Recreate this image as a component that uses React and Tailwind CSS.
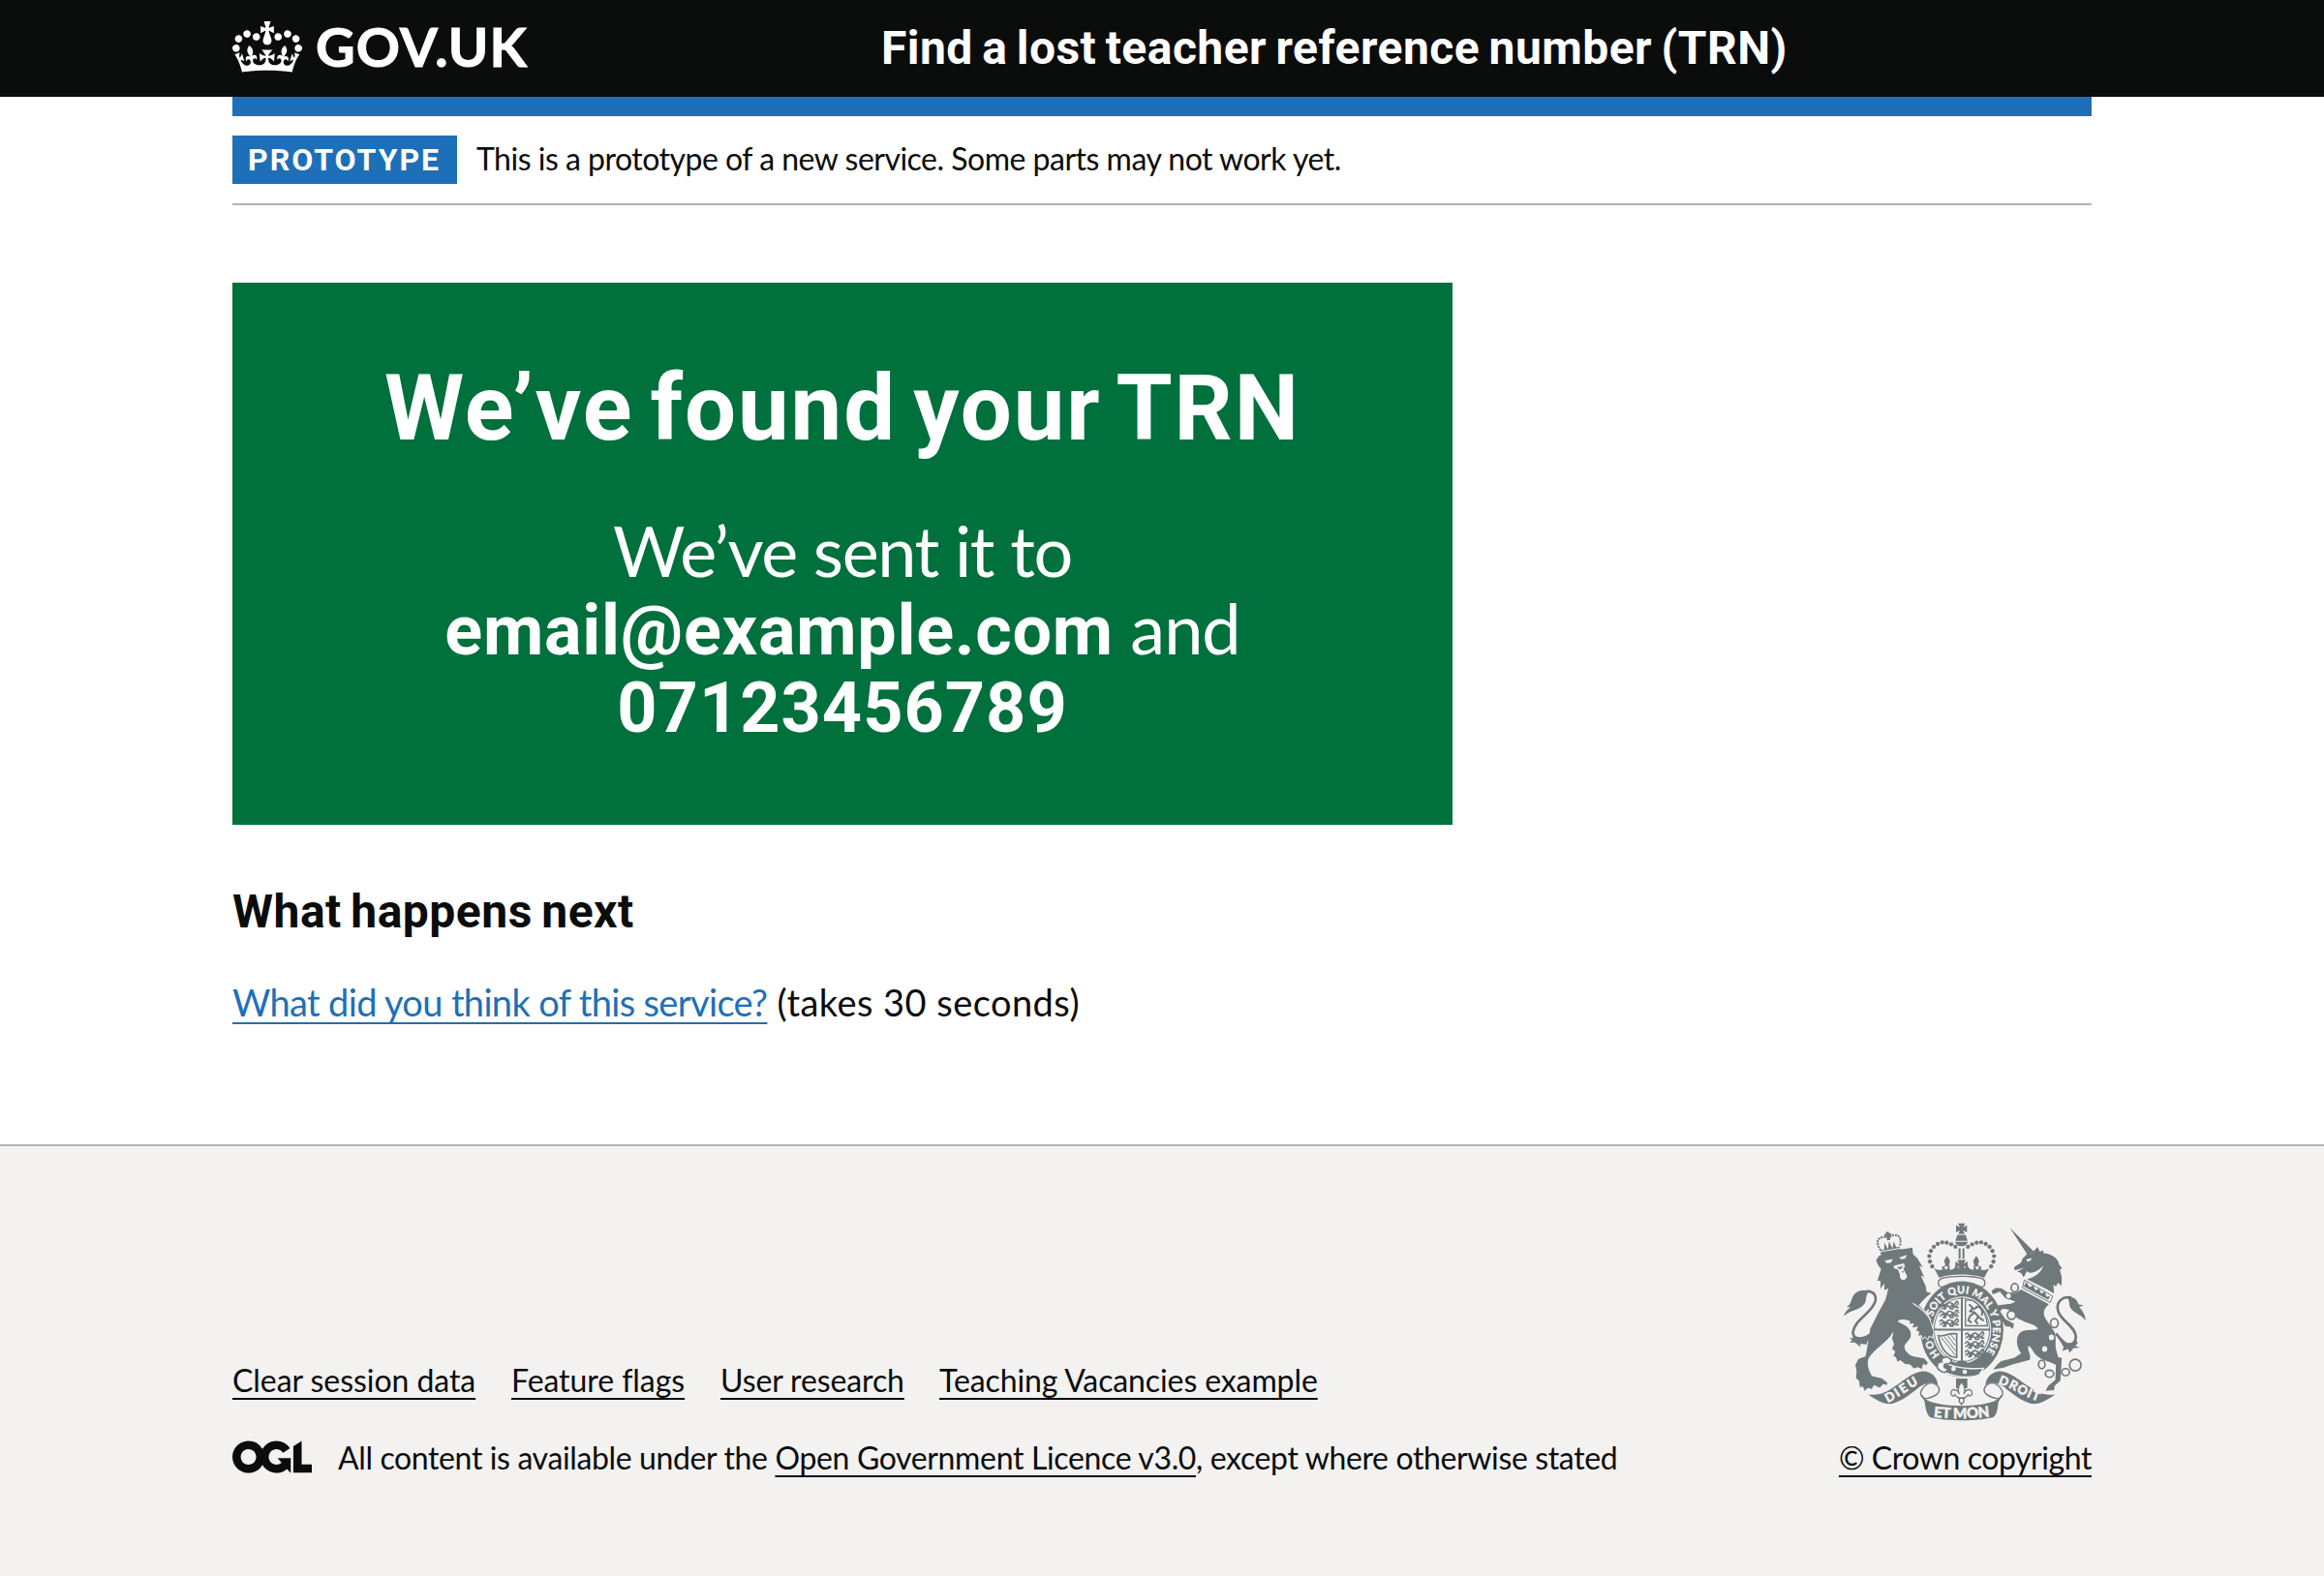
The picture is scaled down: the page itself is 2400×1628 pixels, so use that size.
import React from "react";

const lato = "font-['Lato','Liberation_Sans',sans-serif]";
const roboto = "font-['Roboto','Liberation_Sans',sans-serif] font-bold";
const linkLine =
  "underline decoration-2 underline-offset-[6px] [text-decoration-skip-ink:none]";

function Crown() {
  return (
    <svg viewBox="0 0 132 97" className="h-[53px] w-[72px]" fill="currentColor" aria-hidden="true">
      <path
        fillRule="evenodd"
        d="M25 30.2c3.5 1.5 7.7-.2 9.1-3.7 1.5-3.6-.2-7.8-3.9-9.2-3.6-1.4-7.6.3-9.1 3.9-1.4 3.5.3 7.5 3.9 9zM9 39.5c3.6 1.5 7.8-.2 9.2-3.7 1.5-3.6-.2-7.8-3.9-9.1-3.6-1.5-7.6.2-9.1 3.8-1.4 3.5.3 7.5 3.8 9zM4.4 57.2c3.5 1.5 7.7-.2 9.1-3.8 1.5-3.6-.2-7.7-3.9-9.1-3.5-1.5-7.6.3-9.1 3.8-1.4 3.5.3 7.6 3.9 9.1zm38.3-21.4c3.5 1.5 7.7-.2 9.1-3.8 1.5-3.6-.2-7.7-3.9-9.1-3.6-1.5-7.6.3-9.1 3.8-1.3 3.6.4 7.7 3.9 9.1zm64.4-5.6c-3.6 1.5-7.8-.2-9.1-3.7-1.5-3.6.2-7.8 3.8-9.2 3.6-1.4 7.7.3 9.2 3.9 1.3 3.5-.4 7.5-3.9 9zm15.9 9.3c-3.6 1.5-7.7-.2-9.1-3.7-1.5-3.6.2-7.8 3.7-9.1 3.6-1.5 7.7.2 9.2 3.8 1.5 3.5-.3 7.5-3.8 9zm4.7 17.7c-3.6 1.5-7.8-.2-9.2-3.8-1.5-3.6.2-7.7 3.9-9.1 3.6-1.5 7.7.3 9.2 3.8 1.3 3.5-.4 7.6-3.9 9.1zM89.3 35.8c-3.6 1.5-7.8-.2-9.2-3.8-1.4-3.6.2-7.7 3.9-9.1 3.6-1.5 7.7.3 9.2 3.8 1.4 3.6-.3 7.7-3.9 9.1zM69.7 17.7l8.9 4.7V9.3l-8.9 2.8c-.2-.3-.5-.6-.9-.9L72.4 0H59.6l3.5 11.2c-.3.3-.6.5-.9.9l-8.8-2.8v13.1l8.8-4.7c.3.3.6.7.9.9l-5 15.4v.1c-.2.8-.4 1.6-.4 2.4 0 4.1 3.1 7.5 7 8.1h.2c.3 0 .7.1 1 .1.4 0 .7 0 1-.1h.2c4-.6 7.1-4.1 7.1-8.1 0-.8-.1-1.7-.4-2.4V34l-5.1-15.4c.4-.2.7-.6 1-.9zM66 92.8c16.9 0 32.8 1.1 47.1 3.2 4-16.9 8.9-26.7 14-33.5l-9.6-3.4c1 4.9 1.1 7.2 0 10.2-1.5-1.4-3-4.3-4.2-8.7L108.6 76c2.8-2 5-3.2 7.5-3.3-4.4 9.4-10 11.9-13.6 11.2-4.3-.8-6.3-4.6-5.6-7.9 1-4.7 5.7-5.9 8-.5 4.3-8.7-3-11.4-7.6-8.8 7.1-7.2 7.9-13.5 2.1-21.1-8 6.1-8.1 12.3-4.5 20.8-4.7-5.4-12.1-2.5-9.5 6.2 3.4-5.2 7.9-2 7.2 3.1-.6 4.3-6.4 7.8-13.5 7.2-10.3-.9-10.9-8-11.2-13.8 2.5-.5 7.1 1.8 11 7.3L80.2 60c-4.1 4.4-8 5.3-12.3 5.4 1.4-4.4 8-11.6 8-11.6H55.5s6.4 7.2 7.9 11.6c-4.2-.1-8-1-12.3-5.4l1.4 16.4c3.9-5.5 8.5-7.7 10.9-7.3-.3 5.8-.9 12.8-11.1 13.8-7.2.6-12.9-2.9-13.5-7.2-.7-5 3.8-8.3 7.1-3.1 2.7-8.7-4.6-11.6-9.4-6.2 3.7-8.5 3.6-14.7-4.6-20.8-5.8 7.6-5 13.9 2.2 21.1-4.7-2.6-11.9.1-7.7 8.8 2.3-5.5 7.1-4.2 8.1.5.7 3.3-1.3 7.1-5.7 7.9-3.5.7-9-1.8-13.5-11.2 2.5.1 4.7 1.3 7.5 3.3l-4.7-15.4c-1.2 4.4-2.7 7.2-4.3 8.7-1.1-3-.9-5.3 0-10.2l-9.5 3.4c5 6.9 9.9 16.7 14 33.5 14.8-2.1 30.8-3.2 47.7-3.2z"
      />
    </svg>
  );
}

function OglLogo() {
  return (
    <svg viewBox="0 0 483.2 195.7" className="-mt-[3px] h-[34px] w-[82px] shrink-0" fill="currentColor" aria-hidden="true">
      <path d="M421.5 142.8V.1l-50.7 32.3v161.1h112.4v-50.7zm-122.3-9.6A47.12 47.12 0 0 1 221 97.8c0-26 21.1-47.1 47.1-47.1 16.7 0 31.4 8.7 39.7 21.8l42.7-27.2A97.63 97.63 0 0 0 268.1 0c-36.5 0-68.3 20.1-85.1 49.7A98 98 0 0 0 97.8 0C43.9 0 0 43.9 0 97.8s43.9 97.8 97.8 97.8c36.5 0 68.3-20.1 85.1-49.7a97.76 97.76 0 0 0 149.6 25.4l19.4 22.2h3v-87.8h-80l24.3 27.5zM97.8 145c-26 0-47.1-21.1-47.1-47.1s21.1-47.1 47.1-47.1 47.1 21.1 47.1 47.1S123.8 145 97.8 145" />
    </svg>
  );
}

const G = "#6f787b";
const W = "#f3f2f1";

const beads = [
  [346, 206], [339, 191], [337, 174], [342, 158], [351, 145], [363, 136], [377, 131], [391, 132], [405, 137], [418, 145],
];

function Ribbon() {
  return (
    <>
      <path fill={G} d="M148 603C185 608 205 596 235 575C265 553 290 533 318 531C345 532 360 548 364 573C345 562 325 567 305 581C280 602 250 625 222 632C195 635 172 620 148 603Z" />
      <path fill={W} stroke={G} strokeWidth="4" d="M330 572C345 562 362 570 368 586C370 604 345 612 330 616C312 618 306 600 314 588C318 580 324 576 330 572Z" />
      <path fill="none" stroke={G} strokeWidth="4" d="M314 606C322 622 336 640 352 640" />
    </>
  );
}

function HalfCrown() {
  return (
    <>
      {beads.map(([x, y]) => (
        <circle key={x + "-" + y} cx={x} cy={y} r="6.5" />
      ))}
      <path d="M352 212L368 241C388 234 412 231 438 231V214C428 216 424 208 420 200C417 212 408 220 399 214C404 210 400 202 394 208L392 216L386 214L384 207C378 202 373 208 379 214C370 220 361 216 352 212Z" />
      <path d="M392 174C401 184 404 192 398 199L401 206H383L387 199C381 190 384 184 392 174Z" />
    </>
  );
}

function Lions({ x, y }) {
  return (
    <g transform={`translate(${x} ${y})`} fill="none" stroke={G} strokeWidth="5" strokeLinecap="round">
      {[0, 27, 54].map((dy) => (
        <path
          key={dy}
          d={`M2 ${6 + dy}q6 -8 10 0t10 2t10 -6t9 5t10 -5t8 4M4 ${16 + dy}l8 -6l6 8l8 -7l7 7l7 -8l8 6l7 -6M12 ${21 + dy}h8M34 ${21 + dy}h9M53 ${17 + dy}h6M18 ${8 + dy}v8M42 ${6 + dy}v10`}
        />
      ))}
    </g>
  );
}

function Crest() {
  return (
    <svg viewBox="72 70 750 616" className="mr-1.5 mb-[18px] block h-[205px] w-[250px]" fill={G} aria-hidden="true">
      <defs>
        <path id="garter" d="M385 494A97 111 0 1 1 497 489" />
        <path id="dieu" d="M208 629C243 614 280 579 322 563" />
        <path id="etmon" d="M350 673Q437 683 528 671" />
        <path id="droit" d="M550 570C592 580 625 612 700 632" />
      </defs>

      {/* royal crown */}
      <path d="M426 72H448L442 84L454 78V100L442 94L447 105H427L432 94L420 100V78L432 84Z" />
      <path d="M424 108H450L456 126H418ZM418 129H456C454 139 446 143 437 143S420 139 418 129Z" />
      <path d="M428 150H434V182H428ZM440 150H446V182H440Z" />
      <path d="M424 186H450L444 198L456 190V212L444 204L448 216H426L430 204L418 212V190L430 198Z" />
      <HalfCrown />
      <g transform="translate(875 0) scale(-1 1)">
        <HalfCrown />
      </g>
      <path fill={W} stroke={G} strokeWidth="4" d="M376 243C410 234 465 234 500 243C514 249 512 268 500 270C465 258 410 258 376 270C362 268 360 249 376 243Z" />

      {/* shield and garter */}
      <ellipse cx="438" cy="401" rx="129" ry="149" />
      <ellipse cx="438" cy="403" rx="91" ry="104" fill={W} />
      <ellipse cx="438" cy="403" rx="86" ry="99" fill="none" stroke={G} strokeWidth="3" />
      <path d="M435 303H441V505H435ZM350 399H526V405H350Z" />
      <Lions x={368} y={316} />
      <Lions x={447} y={411} />
      <path fill="none" stroke={G} strokeWidth="4" d="M449 311H470C498 325 515 355 517 390H449Z" />
      <path fill="none" stroke={G} strokeWidth="6" strokeLinecap="round" d="M462 325l10 10l-8 10l14 4l12 14l14 10M478 349l-14 10l-6 14l8 6M490 361l-10 14l6 8M484 330c14 2 20 14 16 26M476 338l10 -6" />
      <path fill="none" stroke={G} strokeWidth="5" d="M362 420C378 428 396 410 422 415V488C398 490 372 462 366 424" />
      <path fill="none" stroke={G} strokeWidth="3" d="M374 426L418 482M384 424L418 468M394 421L418 452M404 418L418 436" />
      <path d="M428 498H448L462 512H414Z" />

      {/* lion */}
      <path
        stroke={W}
        strokeWidth="3"
        d="M170 187L180 172L197 166Q240 150 286 146L288 168L302 181L320 212L308 206L324 242L313 236L327 266L330 284L346 288L326 304L306 326L332 352L342 380L352 410L346 428L336 422L332 434L324 424L316 432L312 420L302 424L304 408L294 406L300 394L282 398L288 384L274 386L276 376C262 372 250 370 240 376L262 388C278 398 284 412 280 426C270 444 258 446 262 462C270 478 282 484 300 486L322 490L334 505L328 514L318 510L316 526L302 520L288 524L278 512L262 510L246 498L238 504L232 488L224 484L230 470L220 462L226 448L220 428L224 412C210 440 170 460 152 488C142 505 150 530 160 545L190 552L208 566L206 576L194 572L184 584L166 576L158 588L146 584L136 594L130 580L120 582L118 562L108 552L110 530L106 512L116 492L138 484L146 440L152 400L174 356L200 308L208 276L196 282V262L184 280V252L174 252L186 214L178 204Z"
      />
      <path fill={W} d="M198 188L224 183L218 194L206 196ZM244 178L268 170L262 181L250 184ZM226 204L258 196L262 206L256 212L268 236Q266 248 254 248Q244 244 246 232L240 216L228 212Z" />
      <path d="M236 210L256 204L248 216ZM250 222L258 220L256 226Z" />
      <path fill="none" stroke={W} strokeWidth="4" d="M286 320C306 332 328 350 342 372" />
      <g transform="rotate(-10 213 135)">
        <path d="M184 150H242L246 166H180Z" />
        <path fill="none" stroke={G} strokeWidth="7" strokeDasharray="0.1 9" strokeLinecap="round" d="M182 148C168 118 186 104 213 116C240 104 258 118 244 148" />
        <path d="M208 98H218V104H224V112H218V124H208V112H202V104H208ZM194 152L198 130L206 152L213 128L220 152L228 130L232 152Z" />
        <path fill="none" stroke={W} strokeWidth="3" d="M184 155H243" />
      </g>
      <path fill="none" stroke={G} strokeWidth="8" d="M120 292C150 274 174 286 170 312C162 350 106 368 100 410C100 432 130 436 156 416" />
      <path d="M72 360C74 348 84 338 94 332L80 332C92 326 92 318 98 304C106 282 128 276 150 284C136 296 146 312 132 326C118 342 92 340 72 360ZM98 412C110 436 140 432 164 404L158 428C148 438 138 440 146 448L122 446L124 456L106 442L90 442L98 434L88 428L100 428Z" />

      {/* unicorn */}
      <path d="M587 86L662 160L642 170Z" />
      <path d="M640 168L656 164L673 145L680 160L690 156L692 165C722 168 738 184 740 200L749 212L742 216L748 240L747 266L736 256L730 268L722 262L724 290L700 276L640 246C664 240 686 224 690 204C676 222 650 232 640 220L630 240L622 226L610 222L632 210L602 218L600 208L622 194L626 182Z" />
      <path fill={W} d="M638 184L656 180L650 189L641 191Z" />
      <path fill={W} stroke={G} strokeWidth="3" d="M632 248L720 298L712 318L626 272Z" />
      <path d="M630 268L638 254L648 270L660 264L666 280L678 274L684 290L696 284L700 300L712 298L706 310Z" />
      <path d="M622 277L708 323C692 338 688 350 698 368L722 404C734 420 726 440 730 462L737 488L748 490L744 560L726 576L724 590L698 592L706 576L728 558L730 512C712 500 690 500 672 484C656 470 656 456 644 452C640 468 656 482 648 496L590 512L568 520L535 526L548 510L560 500L600 490L622 476C606 452 604 424 620 410C636 400 664 406 674 400C668 384 640 384 622 372C604 368 600 350 588 344C572 332 556 338 558 348L574 370L600 384L596 400L586 392L574 392L556 362L542 346L552 326L590 322L604 316C592 306 578 312 568 298L556 284L534 292L530 282L544 272L562 274L580 286L606 288Z" />
      <g fill="none" stroke={G} strokeWidth="5">
        <ellipse cx="602" cy="272" rx="11" ry="13" fill={W} />
        <ellipse cx="592" cy="357" rx="13" ry="13" fill={W} />
        <ellipse cx="725" cy="382" rx="12" ry="14" fill={W} />
        <ellipse cx="686" cy="510" rx="10" ry="13" fill={W} />
        <ellipse cx="710" cy="539" rx="13" ry="11" fill={W} />
        <ellipse cx="760" cy="534" rx="12" ry="11" fill={W} />
        <circle cx="790" cy="512" r="18" />
      </g>
      <ellipse cx="583" cy="297" rx="7" ry="8" fill={W} />
      <ellipse cx="716" cy="426" rx="8" ry="9" fill={W} />
      <ellipse cx="695" cy="462" rx="8" ry="9" fill={W} />
      <path fill="none" stroke={G} strokeWidth="8" d="M778 302C745 298 728 320 738 348C748 376 790 392 792 424C792 442 778 452 762 446C750 440 738 424 730 414" />
      <path d="M764 304C780 296 796 306 800 324L816 326L802 332C812 342 822 358 822 374C808 354 786 352 776 336C768 324 776 314 764 304ZM732 420C750 444 764 452 794 436L798 444L790 452L804 458L784 460L772 474L768 462L750 468L754 456Z" />

      {/* garter motto and buckle */}
      <g fill={W} stroke={W} strokeWidth="1" fontFamily="Lato, sans-serif" fontWeight="900" fontSize="32">
        <text><textPath href="#garter" startOffset="20" textLength="54">HO</textPath></text>
        <text><textPath href="#garter" startOffset="146" textLength="362">SOIT QUI MAL Y PENSE</textPath></text>
      </g>
      <path stroke={W} strokeWidth="4" d="M378 498C400 518 450 526 505 522L492 542C460 555 410 550 370 528Z" />
      <circle cx="412" cy="524" r="7" fill={W} />
      <circle cx="447" cy="533" r="7" fill={W} />
      <path fill={W} stroke={G} strokeWidth="5" d="M404 494C390 480 370 490 376 502C360 500 356 522 370 528C380 540 398 532 392 522C380 522 380 508 392 508C402 508 408 502 404 494Z" />

      {/* motto ribbons */}
      <Ribbon />
      <g transform="translate(875 0) scale(-1 1)">
        <Ribbon />
      </g>
      <path d="M322 616C360 646 515 646 552 616C550 650 546 668 534 675C480 687 395 687 340 675C328 664 324 644 322 616Z" />
      <g fill={W} stroke={W} strokeWidth="1.5" fontFamily="Lato, sans-serif" fontWeight="900" fontSize="39">
        <text><textPath href="#dieu" textLength="112">DIEU</textPath></text>
        <text fontSize="45"><textPath href="#etmon" textLength="175">ET MON</textPath></text>
        <text><textPath href="#droit" textLength="136">DROIT</textPath></text>
      </g>

      {/* fleur-de-lis */}
      <path d="M420 554H455V584H420Z" />
      <path fill={W} stroke={G} strokeWidth="4" d="M437 563C450 580 450 590 444 602C448 588 468 582 470 598C470 608 460 612 458 604C452 612 448 614 444 616V626L437 634L430 626V616C426 614 422 612 416 604C414 612 404 608 404 598C406 582 426 588 430 602C424 590 424 580 437 563Z" />
      <path d="M428 612H446V617H428Z" />
    </svg>
  );
}

const footerLinks = [
  { label: "Clear session data", cls: "w-[251px] tracking-[-0.06px]" },
  { label: "Feature flags", cls: "w-[179px] tracking-[-0.06px]" },
  { label: "User research", cls: "w-[189px] tracking-[-0.12px]" },
  { label: "Teaching Vacancies example", cls: "w-[391px] tracking-[-0.11px]" },
];

export default function App() {
  return (
    <div className={`${lato} flex min-h-[1628px] flex-col bg-white text-[#0b0c0c]`}>
      <header className="h-[100px] bg-[#0b0c0c] text-white">
        <div className="mx-auto flex h-full w-[1920px] items-center">
          <a className="flex w-[670px] items-center">
            <span className="-mt-1">
              <Crown />
            </span>
            <span className="-mt-[5px] ml-3.5 text-[56px] leading-[60px] font-bold tracking-[1.2px] [-webkit-text-stroke:1px_white]">GOV.UK</span>
          </a>
          <span className={`${roboto} text-[48px] leading-[60px] tracking-[0.46px] [word-spacing:-3px] whitespace-nowrap`}>
            Find a lost teacher reference number (TRN)
          </span>
        </div>
      </header>

      <div className="mx-auto w-[1920px]">
        <div className="h-5 bg-[#1d70b8]" />
        <div className="flex h-[92px] border-b-2 border-[#b1b4b6] pt-5">
          <strong className={`${roboto} h-[50px] w-[232px] bg-[#1d70b8] pl-4 text-[32px] leading-[50px] tracking-[2px] text-white`}>
            PROTOTYPE
          </strong>
          <span className="ml-5 text-[32px] leading-[47px] tracking-[-0.5px] whitespace-nowrap">
            This is a prototype of a new service. Some parts may not work yet.
          </span>
        </div>

        <main className="h-[970px] pt-20">
          <section className="h-[560px] w-[1260px] bg-[#00703c] pt-20 text-center text-white">
            <h1 className={`${roboto} text-[94px] leading-[100px] tracking-[1.9px] [word-spacing:-8px]`}>We’ve found your TRN</h1>
            <div className="mt-14 text-[72px] leading-[80px] whitespace-nowrap">
              <div className="h-20 tracking-[-1.4px]">We’ve sent it to</div>
              <div className="h-20">
                <b className={`${roboto} leading-none tracking-[0.7px]`}>email@example.com</b>
                <span className="tracking-[-1px]"> and</span>
              </div>
              <div className="h-20">
                <b className={`${roboto} leading-none tracking-[1px]`}>07123456789</b>
              </div>
            </div>
          </section>
          <h2 className={`${roboto} mt-[60px] text-[48px] leading-[60px] tracking-[0.5px] [word-spacing:-3px]`}>What happens next</h2>
          <p className="mt-[38px] text-[38px] leading-[50px] whitespace-nowrap">
            <a className={`${linkLine} tracking-[-0.65px] text-[#1d70b8]`}>What did you think of this service?</a>
            <span className="tracking-[0.45px]"> (takes 30 seconds)</span>
          </p>
        </main>
      </div>

      <footer className="flex-1 border-t-2 border-[#b1b4b6] bg-[#f3f2f1]">
        <div className="mx-auto flex h-[342px] w-[1920px] items-end justify-between text-[32px] leading-[40px] whitespace-nowrap">
          <div>
            <ul className="flex gap-[37px]">
              {footerLinks.map((l) => (
                <li key={l.label} className={l.cls}>
                  <a className={linkLine}>{l.label}</a>
                </li>
              ))}
            </ul>
            <div className="mt-10 flex items-center">
              <OglLogo />
              <p className="ml-[27px]">
                <span className="tracking-[-0.37px]">All content is available under the </span>
                <a className={`${linkLine} tracking-[-0.35px]`}>Open Government Licence v3.0</a>
                <span className="tracking-[-0.37px]">, except where otherwise stated</span>
              </p>
            </div>
          </div>
          <div className="flex flex-col items-end">
            <Crest />
            <a className={`${linkLine} tracking-[-0.43px]`}>© Crown copyright</a>
          </div>
        </div>
      </footer>
    </div>
  );
}
